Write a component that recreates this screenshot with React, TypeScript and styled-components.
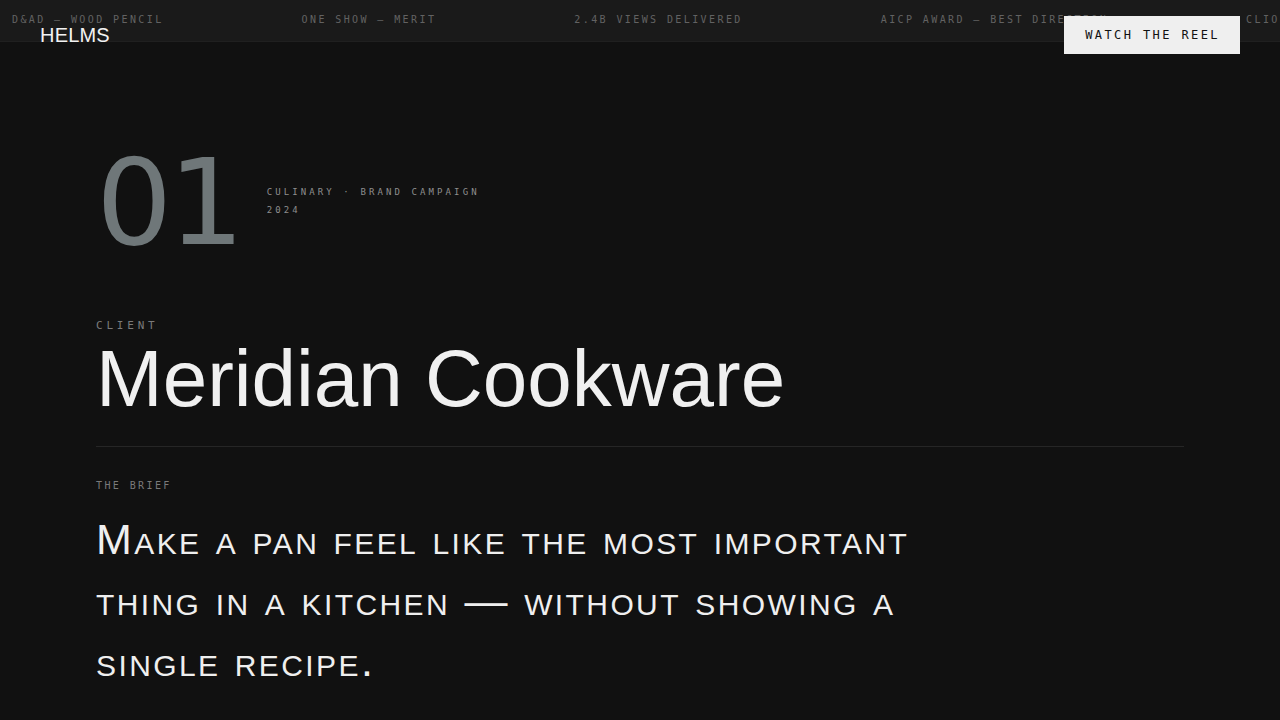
import React from "react";
import styled, { createGlobalStyle } from "styled-components";

const Global = createGlobalStyle`
  html, body { margin: 0; padding: 0; background: #111111; }
  body { font-family: "Liberation Sans", Arial, sans-serif; color: #ededed; }
  * { box-sizing: border-box; }
`;

const MONO = `"DejaVu Sans Mono", "Liberation Mono", monospace`;

const Page = styled.div`
  position: relative;
  min-height: 720px;
  background: #111111;
  overflow: hidden;
`;

const Ticker = styled.div`
  height: 42px;
  background: #1a1a1a;
  border-bottom: 1px solid #202020;
  display: flex;
  align-items: center;
  padding-left: 12px;
  gap: 138px;
  white-space: nowrap;
  overflow: hidden;
`;

const TickerItem = styled.span`
  font-family: ${MONO};
  font-size: 10px;
  letter-spacing: 2.4px;
  color: #626262;
  text-transform: uppercase;
  flex: none;
  margin-top: -2px;
`;

const Nav = styled.nav`
  position: absolute;
  top: 16px;
  left: 0;
  right: 0;
  padding: 0 40px;
  display: flex;
  align-items: center;
  justify-content: space-between;
`;

const Logo = styled.div`
  font-family: "Liberation Sans", Arial, sans-serif;
  font-size: 20px;
  color: #f2f2f2;
  letter-spacing: 0.2px;
`;

const ReelButton = styled.button`
  font-family: ${MONO};
  font-size: 12px;
  letter-spacing: 2.4px;
  color: #111;
  background: #efefef;
  border: none;
  padding: 12px 20px 12px 21px;
  line-height: 14px;
  text-transform: uppercase;
  cursor: pointer;
`;

const Main = styled.main`
  padding: 99px 96px 0;
`;

const Header = styled.div`
  display: flex;
  align-items: center;
  gap: 26px;
`;

const Number = styled.div`
  font-family: "DejaVu Sans", sans-serif;
  font-size: 120px;
  line-height: 1;
  color: #6f7779;
  letter-spacing: -4px;
  margin-top: 2px;
`;

const Meta = styled.div`
  display: flex;
  flex-direction: column;
  margin-top: -3px;
`;

const MetaLine = styled.span`
  font-family: ${MONO};
  font-size: 9px;
  line-height: 18px;
  letter-spacing: 3.1px;
  color: #8e8e8e;
  text-transform: uppercase;
`;

const Label = styled.div<{ $size?: number }>`
  font-family: ${MONO};
  font-size: ${(p) => p.$size ?? 10}px;
  letter-spacing: ${(p) => ((p.$size ?? 10) >= 11 ? 3.8 : 2.4)}px;
  color: #7a7a7a;
  text-transform: uppercase;
  line-height: 1.2;
`;

const ClientBlock = styled.section`
  margin-top: 56px;
`;

const Client = styled.h1`
  margin: 3px 0 0;
  font-family: "Liberation Sans", Arial, sans-serif;
  font-weight: 400;
  font-size: 80px;
  line-height: 1.1;
  color: #f0f0f0;
  letter-spacing: 0;
`;

const Divider = styled.hr`
  border: none;
  border-top: 1px solid #262626;
  margin: 23px 0 0;
  max-width: 1088px;
`;

const BriefBlock = styled.section`
  margin-top: 33px;
`;

const Brief = styled.p`
  margin: 17px 0 0;
  max-width: 860px;
  font-family: "Liberation Sans", Arial, sans-serif;
  font-variant: small-caps;
  font-size: 43px;
  line-height: 61px;
  letter-spacing: 2.4px;
  color: #efefef;
`;

const tickerItems = [
  "D&AD — Wood Pencil",
  "One Show — Merit",
  "2.4B Views Delivered",
  "AICP Award — Best Direction",
  "Clio — Gold",
];

export default function App() {
  return (
    <Page>
      <Global />
      <Ticker>
        {tickerItems.map((t) => (
          <TickerItem key={t}>{t}</TickerItem>
        ))}
      </Ticker>
      <Nav>
        <Logo>HELMS</Logo>
        <ReelButton>Watch the reel</ReelButton>
      </Nav>
      <Main>
        <Header>
          <Number>01</Number>
          <Meta>
            <MetaLine>Culinary · Brand Campaign</MetaLine>
            <MetaLine>2024</MetaLine>
          </Meta>
        </Header>
        <ClientBlock>
          <Label $size={11}>Client</Label>
          <Client>Meridian Cookware</Client>
        </ClientBlock>
        <Divider />
        <BriefBlock>
          <Label>The Brief</Label>
          <Brief>
            Make a pan feel like the most important thing in a kitchen — without showing a single recipe.
          </Brief>
        </BriefBlock>
      </Main>
    </Page>
  );
}
